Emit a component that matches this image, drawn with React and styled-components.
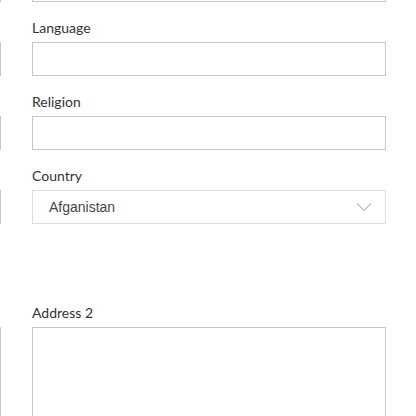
import React from "react";
import styled, { createGlobalStyle } from "styled-components";

const GlobalStyle = createGlobalStyle`
  html, body {
    margin: 0;
    padding: 0;
    background: #ffffff;
    overflow: hidden;
  }
  * {
    box-sizing: border-box;
  }
`;

const Page = styled.div`
  width: 416px;
  height: 416px;
  overflow: hidden;
`;

const Columns = styled.div`
  display: grid;
  grid-template-columns: 354px 354px;
  column-gap: 31px;
  margin-left: -353px;
  margin-top: -32px;
`;

const Column = styled.div`
  display: flex;
  flex-direction: column;
`;

const Field = styled.div`
  display: flex;
  flex-direction: column;
  margin-bottom: 16px;
  margin-top: ${(p) => p.$offset || 0}px;
`;

const Label = styled.label`
  font-family: Lato, "Liberation Sans", sans-serif;
  font-size: 14px;
  line-height: 20px;
  color: #333333;
  margin-bottom: 4px;
`;

const Input = styled.div`
  height: 34px;
  border: 1px solid #c6c6c6;
  background: #ffffff;
`;

const Select = styled.div`
  height: 34px;
  border: 1px solid #dedede;
  background: #ffffff;
  display: flex;
  align-items: center;
  justify-content: space-between;
  padding: 0 13px 0 16px;
  font-family: "Liberation Sans", Arial, sans-serif;
  font-size: 14px;
  color: #444444;
`;

const TextArea = styled.div`
  height: 120px;
  border: 1px solid #c6c6c6;
  background: #ffffff;
`;

const Chevron = () => (
  <svg width="16" height="10" viewBox="0 0 16 10">
    <path d="M1 1.5 L8 8.5 L15 1.5" fill="none" stroke="#bcbcbc" strokeWidth="1.1" />
  </svg>
);

const fields = [
  { label: "Language" },
  { label: "Religion" },
];

export default function App() {
  return (
    <Page>
      <GlobalStyle />
      <Columns>
        <Column>
          <Field>
            <Input />
          </Field>
          <Field>
            <Label>&nbsp;</Label>
            <Input />
          </Field>
          <Field>
            <Label>&nbsp;</Label>
            <Input />
          </Field>
          <Field>
            <Label>&nbsp;</Label>
            <Input />
          </Field>
          <Field $offset={63}>
            <Label>&nbsp;</Label>
            <TextArea />
          </Field>
        </Column>
        <Column>
          <Field>
            <Input />
          </Field>
          {fields.map((f) => (
            <Field key={f.label}>
              <Label>{f.label}</Label>
              <Input />
            </Field>
          ))}
          <Field>
            <Label>Country</Label>
            <Select>
              <span>Afganistan</span>
              <Chevron />
            </Select>
          </Field>
          <Field $offset={63}>
            <Label>Address 2</Label>
            <TextArea />
          </Field>
        </Column>
      </Columns>
    </Page>
  );
}
